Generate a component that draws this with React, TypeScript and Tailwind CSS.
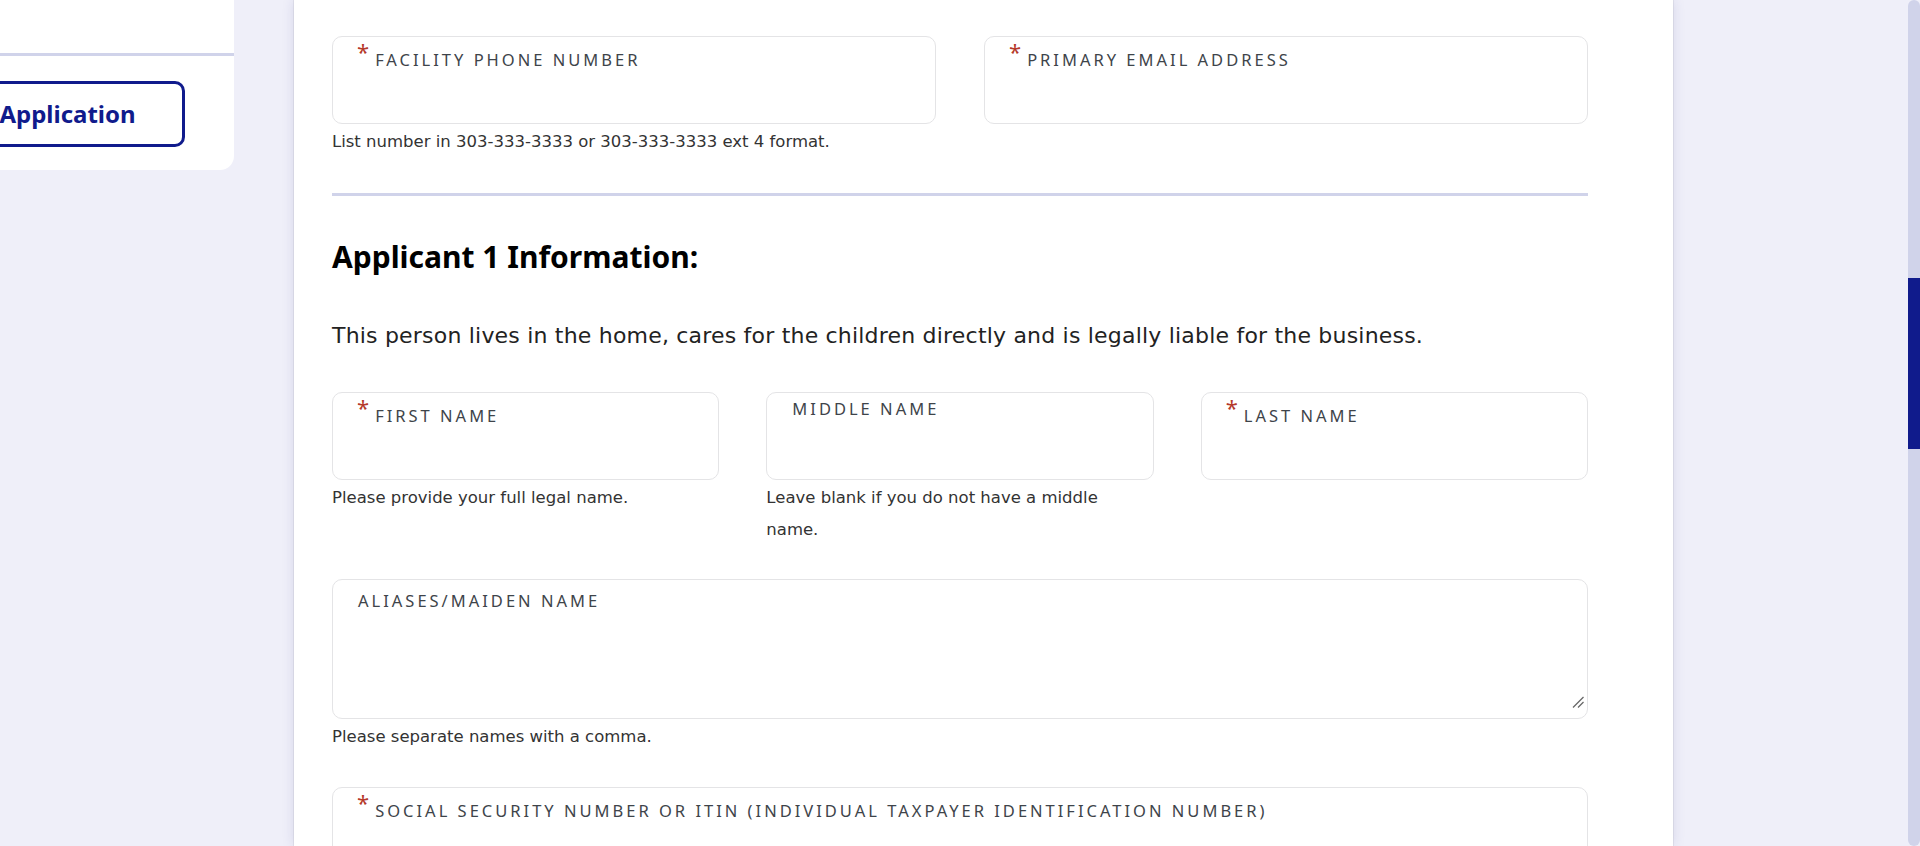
type FieldProps = {
  label: string;
  required?: boolean;
  helper?: string;
  multiline?: boolean;
};

const FieldLabel = ({ label, required, multiline }: { label: string; required?: boolean; multiline?: boolean }) => {
  const text =
    "font-['Noto_Sans',sans-serif] text-[16.5px] leading-[20px] tracking-[3px] uppercase text-[#3e444a]";

  if (required) {
    return (
      <div className="flex items-start pl-[24px] pt-[3px]">
        <span className="font-['Noto_Sans',sans-serif] text-[22px] leading-[22px] text-[#b5392a]">*</span>
        <span className={`ml-[6px] mt-[10px] ${text}`}>{label}</span>
      </div>
    );
  }

  return <div className={`pl-[25px] ${multiline ? 'pt-[11px]' : 'pt-[6px]'} ${text}`}>{label}</div>;
};

const Field = ({ label, required, helper, multiline }: FieldProps) => {
  return (
    <div>
      <div
        className={`rounded-[10px] border border-[#e4e4e6] bg-white ${
          multiline ? 'flex h-[140px] flex-col' : 'h-[88px]'
        }`}
      >
        <FieldLabel label={label} required={required} multiline={multiline} />
        {multiline && (
          <div className="mt-auto flex justify-end pb-[10px] pr-[3px]">
            {/* resize grip */}
            <svg width="12" height="12" viewBox="0 0 12 12" fill="none">
              <path d="M1 11.5 L11.5 1" stroke="#666" strokeWidth="1.2" />
              <path d="M6 11.5 L11.5 6" stroke="#666" strokeWidth="1.2" />
            </svg>
          </div>
        )}
      </div>
      {helper && (
        <p className="pr-4 pt-[2px] font-['DejaVu_Sans',sans-serif] text-[16.5px] leading-[32px] text-[#333]">
          {helper}
        </p>
      )}
    </div>
  );
};

const Sidebar = () => {
  return (
    <aside className="-ml-[99px] w-[333px] shrink-0 self-start rounded-b-[14px] bg-white">
      <div className="h-[53px]" />
      <div className="h-[3px] bg-[#d0d3ea]" />
      <div className="px-[49px] pb-[23px] pt-[25px]">
        <button className="flex h-[66px] w-full items-center justify-center rounded-[10px] border-[3px] border-[#101b8c] bg-white font-['Noto_Sans',sans-serif] text-[24px] font-bold text-[#101b8c]">
          Application
        </button>
      </div>
    </aside>
  );
};

export default function App() {
  return (
    <div className="flex h-[846px] w-full overflow-hidden bg-[#efeff9]">
      <div className="flex min-w-0 flex-1 items-stretch">
        <Sidebar />

        {/* main form card */}
        <main className="ml-[60px] w-[1379px] shrink-0 bg-white pl-[38px] pr-[85px] pt-[36px] shadow-[0_0_1px_rgba(0,0,0,0.3),0_0_12px_rgba(40,40,120,0.13)]">
          <div className="grid grid-cols-2 gap-x-[48px]">
            <Field
              label="Facility Phone Number"
              required
              helper="List number in 303-333-3333 or 303-333-3333 ext 4 format."
            />
            <Field label="Primary Email Address" required />
          </div>

          <div className="mt-[35px] h-[3px] bg-[#d0d3ea]" />

          <h2 className="mt-[41px] font-['Noto_Sans',sans-serif] text-[30px] font-bold leading-[40px] text-black">
            Applicant 1 Information:
          </h2>

          <p className="mt-[43px] font-['DejaVu_Sans',sans-serif] text-[22px] leading-[32px] tracking-[0.2px] text-[#222]">
            This person lives in the home, cares for the children directly and is legally liable for the business.
          </p>

          <div className="mt-[40px] grid grid-cols-3 gap-x-[47px]">
            <Field label="First Name" required helper="Please provide your full legal name." />
            <Field label="Middle Name" helper="Leave blank if you do not have a middle name." />
            <Field label="Last Name" required />
          </div>

          <div className="mt-[33px]">
            <Field label="Aliases/Maiden Name" multiline helper="Please separate names with a comma." />
          </div>

          <div className="mt-[34px]">
            <Field
              label="Social Security Number or ITIN (Individual Taxpayer Identification Number)"
              required
            />
          </div>
        </main>
      </div>

      {/* page scrollbar */}
      <div className="flex w-[12px] shrink-0 flex-col overflow-hidden rounded-[6px] bg-[#d0d3ea]">
        <div className="h-[278px]" />
        <div className="h-[171px] bg-[#101b8c]" />
      </div>
    </div>
  );
}
